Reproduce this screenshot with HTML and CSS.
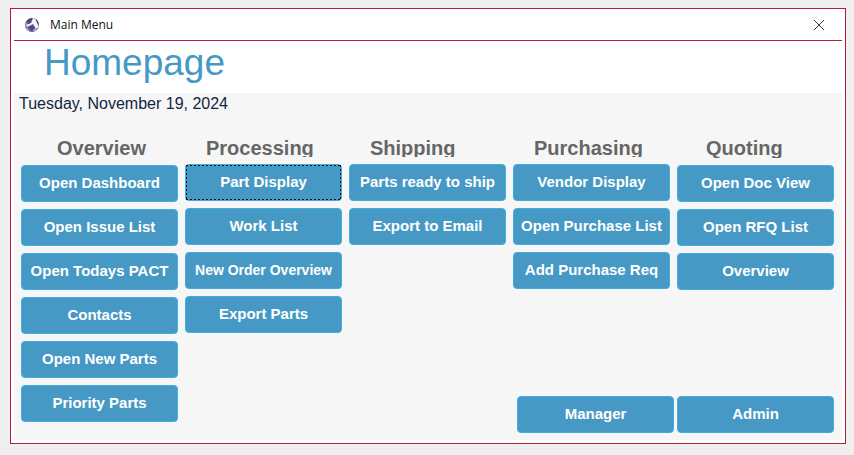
FILE: index.html
```html
<!DOCTYPE html>
<html lang="en">
<head>
<meta charset="utf-8">
<title>Main Menu</title>
<link rel="stylesheet" href="styles.css">
</head>
<body>
<div class="window">
  <header class="titlebar">
    <svg class="logo" viewBox="0 0 14 14" aria-hidden="true">
      <clipPath id="disc"><circle cx="7" cy="7" r="7"/></clipPath>
      <g clip-path="url(#disc)">
        <rect width="14" height="14" fill="#6c5f92"/>
        <path d="M0 5L5 0H8L1 8Z" fill="#a49bba"/>
        <path d="M1 4L4 1L5 2L2 5Z" fill="#483a70"/>
        <path d="M5 0H8L6 5L3 7L2 6Z" fill="#51437c"/>
        <path d="M8 0H10L14 9L11 11L8 6L2 9L1 7L6 5Z" fill="#f4f2f8"/>
        <path d="M10 0L13 2L14 8Z" fill="#3f3068"/>
        <path d="M3 9L8 7L10 10L6 13Z" fill="#564782"/>
        <path d="M0 9L3 10L5 13L2 13Z" fill="#a59bbd"/>
        <path d="M9 11L12 10L11 13L8 14Z" fill="#b5adc8"/>
      </g>
    </svg>
    <span class="caption">Main Menu</span>
    <button class="close" type="button" aria-label="Close">
      <svg viewBox="0 0 10 10" aria-hidden="true"><path d="M0 0L10 10M10 0L0 10"/></svg>
    </button>
  </header>
  <div class="heading"><h1>Homepage</h1></div>
  <main class="panel">
    <p class="date">Tuesday, November 19, 2024</p>
    <div class="columns">
      <section class="column column-low column-overview">
        <h2>Overview</h2>
        <button class="action" type="button">Open Dashboard</button>
        <button class="action" type="button">Open Issue List</button>
        <button class="action" type="button">Open Todays PACT</button>
        <button class="action" type="button">Contacts</button>
        <button class="action" type="button">Open New Parts</button>
        <button class="action" type="button">Priority Parts</button>
      </section>
      <section class="column">
        <h2>Processing</h2>
        <button class="action current" type="button">Part Display</button>
        <button class="action" type="button">Work List</button>
        <button class="action compact" type="button">New Order Overview</button>
        <button class="action" type="button">Export Parts</button>
      </section>
      <section class="column">
        <h2>Shipping</h2>
        <button class="action" type="button">Parts ready to ship</button>
        <button class="action" type="button">Export to Email</button>
      </section>
      <section class="column">
        <h2>Purchasing</h2>
        <button class="action" type="button">Vendor Display</button>
        <button class="action" type="button">Open Purchase List</button>
        <button class="action" type="button">Add Purchase Req</button>
      </section>
      <section class="column column-low column-quoting">
        <h2>Quoting</h2>
        <button class="action" type="button">Open Doc View</button>
        <button class="action" type="button">Open RFQ List</button>
        <button class="action" type="button">Overview</button>
      </section>
      <div class="admin">
        <button class="action" type="button">Manager</button>
        <button class="action" type="button">Admin</button>
      </div>
    </div>
  </main>
</div>
</body>
</html>
```
FILE: styles.css
```css
* {
  box-sizing: border-box;
}

body {
  margin: 0;
  padding: 8px 8px 11px 10px;
  min-height: 100vh;
  display: flex;
  background: #efefef;
  font-family: "Liberation Sans", Arial, sans-serif;
}

.window {
  flex: 1;
  display: flex;
  flex-direction: column;
  padding: 0 3px 3px;
  border: 1px solid #b01e37;
  background: #fff;
}

.titlebar {
  display: flex;
  align-items: center;
  height: 32px;
  padding: 0 18px 0 11px;
  border-bottom: 1px solid #b01e37;
}

.logo {
  width: 14px;
  height: 14px;
}

.caption {
  margin-left: 11px;
  font: 12px/16px "Open Sans", "Segoe UI", sans-serif;
  color: #111;
}

.close {
  margin-left: auto;
  padding: 0;
  border: 0;
  background: none;
  display: flex;
}

.close svg {
  width: 10px;
  height: 10px;
  overflow: visible;
  stroke: #333;
  fill: none;
}

.heading {
  height: 52px;
  padding-left: 30px;
}

h1 {
  margin: 0;
  font-size: 37px;
  line-height: 44px;
  font-weight: 400;
  color: #4699c4;
}

.panel {
  flex: 1;
  display: flex;
  flex-direction: column;
  padding: 0 8px 7px 7px;
  background: #f6f6f6;
}

.date {
  margin: 0 0 0 -2px;
  font-size: 16px;
  line-height: 22px;
  color: #12263f;
}

.columns {
  flex: 1;
  display: grid;
  grid-template-columns: repeat(5, 1fr);
  grid-template-rows: 228px 1fr;
  column-gap: 7px;
  padding-top: 22px;
}

.column {
  display: flex;
  flex-direction: column;
  gap: 7px;
}

.column-overview {
  grid-row: 1 / 3;
}

h2 {
  flex: none;
  height: 20px;
  margin: 0;
  padding-left: 21px;
  overflow: hidden;
  font-size: 20px;
  line-height: 22px;
  font-weight: 700;
  color: #666;
}

.column-overview h2 {
  padding-left: 36px;
}

.column-quoting h2 {
  padding-left: 29px;
}

.column-low h2 {
  height: 21px;
}

.action {
  flex: none;
  height: 37px;
  padding: 0 0 2px;
  border: 1px solid #41addf;
  border-radius: 4px;
  background: #4699c4;
  color: #fff;
  font: 700 15px/20px "Liberation Sans", Arial, sans-serif;
  white-space: nowrap;
}

.compact {
  font-size: 14px;
}

.current {
  position: relative;
  outline: none;
}

.current::after {
  content: "";
  position: absolute;
  inset: 0;
  background:
    repeating-linear-gradient(90deg, #111 0 2px, transparent 2px 4px) top / 100% 1px no-repeat,
    repeating-linear-gradient(90deg, #111 0 2px, transparent 2px 4px) bottom / 100% 1px no-repeat,
    repeating-linear-gradient(#111 0 2px, transparent 2px 4px) left / 1px 100% no-repeat,
    repeating-linear-gradient(#111 0 2px, transparent 2px 4px) right / 1px 100% no-repeat;
}

.admin {
  grid-column: 4 / -1;
  grid-row: 2;
  align-self: end;
  display: grid;
  grid-template-columns: 1fr 1fr;
  gap: 3px;
  margin-left: 4px;
}
```
